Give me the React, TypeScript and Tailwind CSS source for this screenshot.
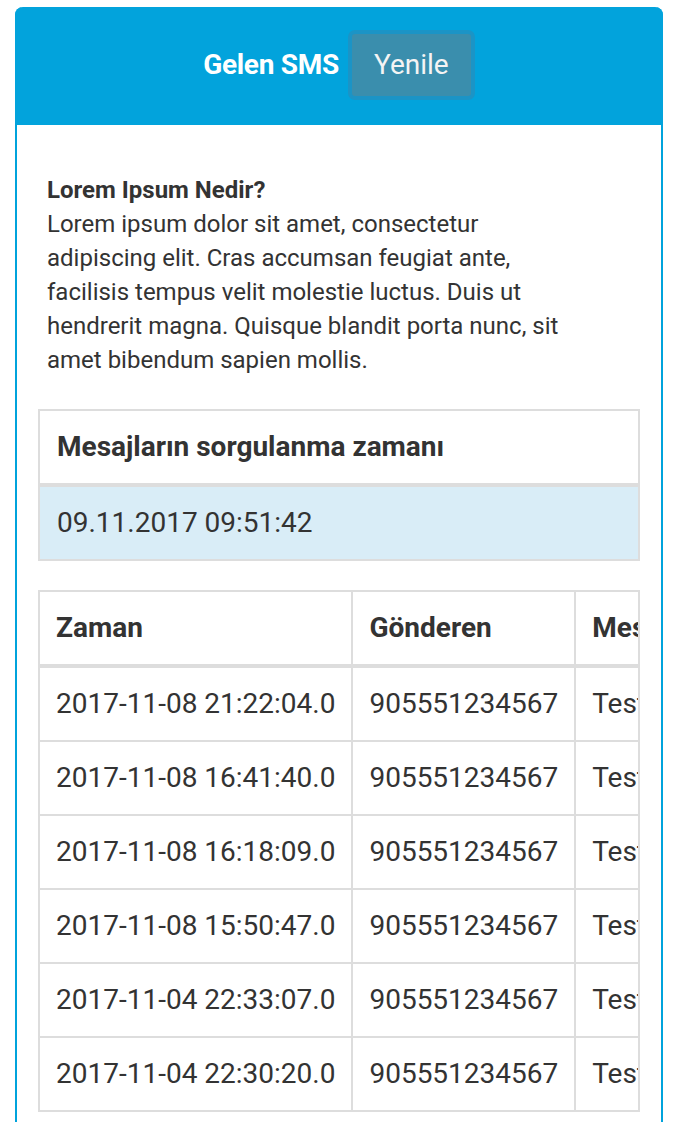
import React from 'react';

const rows = [
  '2017-11-08 21:22:04.0',
  '2017-11-08 16:41:40.0',
  '2017-11-08 16:18:09.0',
  '2017-11-08 15:50:47.0',
  '2017-11-04 22:33:07.0',
  '2017-11-04 22:30:20.0',
];

export default function App() {
  return (
    <div className="min-h-[1122px] bg-white pt-[7px] px-[15px] text-[#333]" style={{ fontFamily: 'Roboto, "Liberation Sans", sans-serif' }}>
      <div className="rounded-t-[8px] border-x-2 border-[#00a3dc] min-h-[1115px]">
        <div className="bg-[#02a3dc] -mx-[2px] rounded-t-[8px] h-[118px] flex items-center justify-center gap-[9px] pb-[2px]">
          <span className="text-white font-bold text-[28px] tracking-[-0.3px]">Gelen SMS</span>
          <button className="h-[70px] w-[127px] rounded-[7px] border-[4px] border-[#1b94c6] bg-[#3a8ead] text-[#f4f4f4] text-[28px]">
            Yenile
          </button>
        </div>

        <div className="px-[21px]">
          <div className="mt-[48px] ml-[9px] w-[530px] text-[24px] leading-[34px]">
            <div className="font-bold">Lorem Ipsum Nedir?</div>
            <div>
              Lorem ipsum dolor sit amet, consectetur adipiscing elit. Cras accumsan feugiat ante, facilisis tempus velit molestie luctus. Duis ut hendrerit magna. Quisque blandit porta nunc, sit amet bibendum sapien mollis.
            </div>
          </div>

          <table className="mt-[32px] w-full border-collapse text-[28px]">
            <thead>
              <tr>
                <th className="border-2 border-b-[4px] border-[#ddd] text-left font-bold px-[17px] py-[19px] leading-[34px]">
                  Mesajların sorgulanma zamanı
                </th>
              </tr>
            </thead>
            <tbody>
              <tr>
                <td className="border-2 border-[#ddd] bg-[#d9edf7] px-[17px] py-[19px] leading-[34px]">09.11.2017 09:51:42</td>
              </tr>
            </tbody>
          </table>

          <div className="mt-[29px] overflow-hidden border-r-2 border-[#ddd]">
            <table className="border-collapse text-[28px] whitespace-nowrap">
              <thead>
                <tr>
                  <th className="border-2 border-b-[4px] border-[#ddd] text-left font-bold px-[16px] py-[19px] leading-[34px] w-[312px]">Zaman</th>
                  <th className="border-2 border-b-[4px] border-[#ddd] text-left font-bold px-[16px] py-[19px] leading-[34px] w-[222px]">Gönderen</th>
                  <th className="border-2 border-b-[4px] border-[#ddd] text-left font-bold px-[16px] py-[19px] leading-[34px]">Mesaj</th>
                </tr>
              </thead>
              <tbody>
                {rows.map((r) => (
                  <tr key={r}>
                    <td className="border-2 border-[#ddd] px-[16px] py-[19px] leading-[34px]">{r}</td>
                    <td className="border-2 border-[#ddd] px-[16px] py-[19px] leading-[34px]">905551234567</td>
                    <td className="border-2 border-[#ddd] px-[16px] py-[19px] leading-[34px]">Test mesajı</td>
                  </tr>
                ))}
              </tbody>
            </table>
          </div>
        </div>
      </div>
    </div>
  );
}
